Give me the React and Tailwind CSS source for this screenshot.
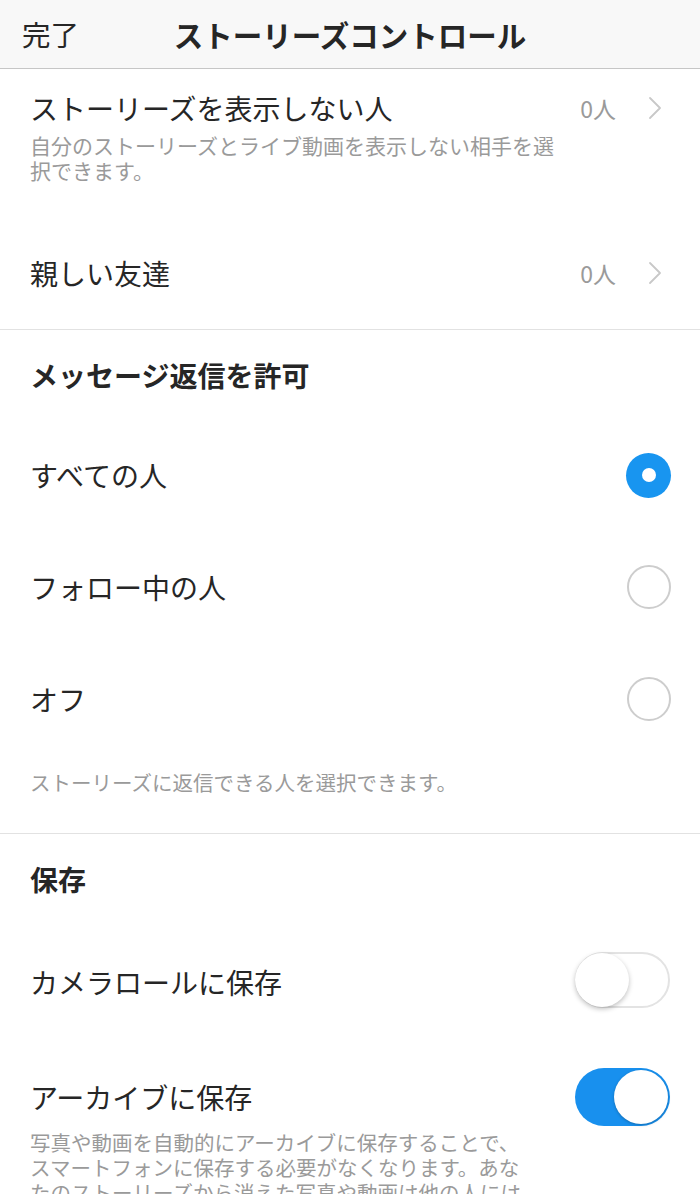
import React from "react";

const font = { fontFamily: '"Noto Sans CJK JP", "Noto Sans", sans-serif' };

function Chevron() {
  return (
    <svg width="14" height="24" viewBox="0 0 14 24" fill="none">
      <polyline points="2,2 12,12 2,22" stroke="#c8c8c8" strokeWidth="1.8" strokeLinecap="round" strokeLinejoin="round" />
    </svg>
  );
}

function Radio({ on }) {
  if (on)
    return (
      <div className="w-[45px] h-[45px] rounded-full bg-[#1895f0] flex items-center justify-center">
        <div className="w-[14px] h-[14px] rounded-full bg-white" />
      </div>
    );
  return <div className="w-[44px] h-[44px] rounded-full border-2 border-[#cdcdcd]" />;
}

function Toggle({ on }) {
  if (on)
    return (
      <div className="w-[95px] h-[58px] rounded-full bg-[#1890ee] flex items-center justify-end pr-[2px]">
        <div className="w-[54px] h-[54px] rounded-full bg-white shadow-[0_1px_3px_rgba(0,0,0,0.25)]" />
      </div>
    );
  return (
    <div className="w-[95px] h-[56px] rounded-full bg-white border-2 border-[#e3e3e3] flex items-center justify-start">
      <div className="w-[54px] h-[54px] -ml-[2px] rounded-full bg-white shadow-[0_2px_5px_rgba(0,0,0,0.25)]" />
    </div>
  );
}

export default function App() {
  return (
    <div className="w-[700px] h-[1194px] overflow-hidden bg-white text-[#262626]" style={font}>
      {/* Header */}
      <div className="h-[69px] bg-[#f8f8f8] border-b border-[#c6c6c6] grid grid-cols-[1fr_auto_1fr] items-center px-[22px]">
        <div className="text-[28.5px] leading-[34px] text-[#262626]">完了</div>
        <div className="text-[29.5px] leading-[34px] font-bold">ストーリーズコントロール</div>
        <div />
      </div>

      {/* Section 1 */}
      <div className="pt-[22px] border-b border-[#e2e2e2]">
        <div className="flex items-start justify-between pl-[30px] pr-[38px]">
          <div>
            <div className="text-[28px] leading-[34px]">ストーリーズを表示しない人</div>
            <div className="mt-[8px] text-[21px] leading-[25px] text-[#9a9a9a] whitespace-nowrap">
              自分のストーリーズとライブ動画を表示しない相手を選
              <br />
              択できます。
            </div>
          </div>
          <div className="h-[34px] flex items-center gap-[32px]">
            <span className="text-[23px] text-[#9a9a9a]">0人</span>
            <Chevron />
          </div>
        </div>
        <div className="mt-[34px] h-[112px] flex items-center justify-between pl-[30px] pr-[38px]">
          <div className="text-[28px] leading-[34px]">親しい友達</div>
          <div className="h-[34px] flex items-center gap-[32px]">
            <span className="text-[23px] text-[#9a9a9a]">0人</span>
            <Chevron />
          </div>
        </div>
      </div>

      {/* Section 2 */}
      <div className="border-b border-[#e2e2e2] pb-[38px]">
        <div className="h-[89px] flex items-center px-[30px]">
          <div className="text-[28px] leading-[34px] font-bold">メッセージ返信を許可</div>
        </div>
        {[
          ["すべての人", true],
          ["フォロー中の人", false],
          ["オフ", false],
        ].map(([label, on]) => (
          <div key={label} className="h-[112px] flex items-center justify-between pl-[30px] pr-[29px]">
            <div className="text-[28px] leading-[34px]">{label}</div>
            <Radio on={on} />
          </div>
        ))}
        <div className="pt-[15px] px-[30px] text-[20.5px] leading-[25px] text-[#9a9a9a]">
          ストーリーズに返信できる人を選択できます。
        </div>
      </div>

      {/* Section 3 */}
      <div>
        <div className="h-[90px] flex items-center px-[30px]">
          <div className="text-[28px] leading-[34px] font-bold">保存</div>
        </div>
        <div className="h-[112px] flex items-center justify-between pl-[30px] pr-[30px]">
          <div className="text-[28px] leading-[34px] mt-[4px]">カメラロールに保存</div>
          <Toggle on={false} />
        </div>
        <div className="pt-[44px] flex items-start justify-between pl-[30px] pr-[30px]">
          <div>
            <div className="text-[28px] leading-[34px]">アーカイブに保存</div>
            <div className="mt-[16px] text-[20.5px] leading-[25px] text-[#9a9a9a] whitespace-nowrap">
              写真や動画を自動的にアーカイブに保存することで、
              <br />
              スマートフォンに保存する必要がなくなります。あな
              <br />
              たのストーリーズから消えた写真や動画は他の人には
            </div>
          </div>
          <div className="-mt-[12px]">
            <Toggle on={true} />
          </div>
        </div>
      </div>
    </div>
  );
}
